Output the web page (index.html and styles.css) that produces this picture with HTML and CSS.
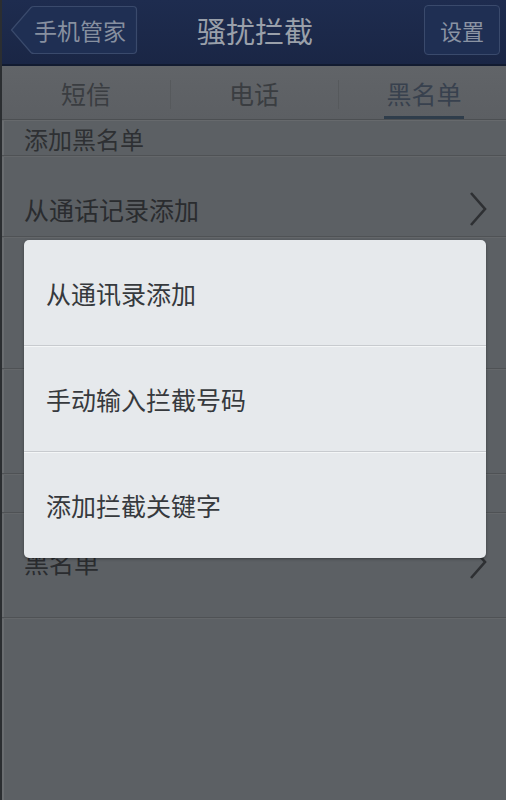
FILE: index.html
```html
<!DOCTYPE html>
<html lang="zh-CN">
<head>
<meta charset="utf-8">
<link rel="stylesheet" href="styles.css">
</head>
<body>
<div class="screen">
  <header class="topbar">
    <div class="back-btn">
      <svg class="back-shape" viewBox="0 0 128 50" width="128" height="50">
        <path d="M1.5 25 L21 2.5 Q22 1.5 24 1.5 H123 Q126.5 1.5 126.5 5 V45 Q126.5 48.5 123 48.5 H24 Q22 48.5 21 47.5 Z" fill="#1f2f53" stroke="#3a4a6c" stroke-width="1.2"/>
      </svg>
      <span class="back-label">手机管家</span>
    </div>
    <div class="title">骚扰拦截</div>
    <div class="set-btn">设置</div>
  </header>

  <nav class="tabs">
    <div class="tab">短信</div>
    <div class="tab tab-sep">电话</div>
    <div class="tab tab-sep active"><span class="tab-label">黑名单</span></div>
  </nav>

  <div class="section-head">添加黑名单</div>
  <div class="row row-first">
    <span class="row-text">从通话记录添加</span>
    <svg class="chev" viewBox="0 0 20 36" width="20" height="36"><path d="M3 2 L17 18 L3 34" fill="none" stroke="#2e3033" stroke-width="2.6"/></svg>
  </div>
  <div class="row row-hidden-a"></div>
  <div class="row row-hidden-b"></div>
  <div class="section-head section-gap"></div>
  <div class="row row-last">
    <span class="row-text">黑名单</span>
    <svg class="chev" viewBox="0 0 20 36" width="20" height="36"><path d="M3 2 L17 18 L3 34" fill="none" stroke="#2e3033" stroke-width="2.6"/></svg>
  </div>

  <div class="dialog">
    <div class="dlg-item">从通讯录添加</div>
    <div class="dlg-item">手动输入拦截号码</div>
    <div class="dlg-item">添加拦截关键字</div>
  </div>
</div>
</body>
</html>
```

FILE: styles.css
```css
html, body {
  margin: 0;
  padding: 0;
}
body {
  width: 506px;
  height: 800px;
  overflow: hidden;
  background: #5c6064;
  font-family: "Noto Sans CJK SC", "Noto Sans", sans-serif;
}
.screen {
  position: relative;
  width: 506px;
  height: 800px;
  box-sizing: border-box;
  border-left: 2px solid #2b2e31;
  box-shadow: inset 2px 0 0 #6a6d70;
  background: #5c6064;
}

/* header */
.topbar {
  height: 60px;
  border-bottom: 2px solid #121b30;
  background: linear-gradient(#1e2c4f, #1a2645);
  display: grid;
  grid-template-columns: 1fr auto 1fr;
  align-items: center;
  padding: 0 4px 4px 8px;
}
.back-btn {
  display: grid;
  width: 128px;
  height: 50px;
}
.back-shape, .back-label {
  grid-area: 1 / 1;
}
.back-label {
  align-self: center;
  justify-self: end;
  margin-right: 12px;
  font-size: 23px;
  color: #8790a0;
}
.title {
  text-align: center;
  font-size: 29px;
  color: #9aa0aa;
  margin-left: -2px;
}
.set-btn {
  justify-self: end;
  margin-right: 2px;
  width: 74px;
  height: 48px;
  border: 1px solid #3a4a6c;
  border-radius: 4px;
  background: #1f2f53;
  display: flex;
  align-items: center;
  justify-content: center;
  font-size: 22px;
  color: #8a93a3;
}

/* tabs */
.tabs {
  height: 53px;
  display: flex;
  background: linear-gradient(#616468, #5c5f63);
  border-bottom: 1px solid #4c4f52;
  box-shadow: 0 1px 0 #66696c;
}
.tab {
  flex: 1;
  display: flex;
  align-items: center;
  justify-content: center;
  font-size: 25px;
  color: #3a3d41;
  position: relative;
}
.tab-sep::before {
  content: "";
  position: absolute;
  left: 0;
  top: 14px;
  bottom: 10px;
  width: 1px;
  background: #56595c;
}
.tab.active { color: #38414e; }
.tab-label {
  align-self: stretch;
  display: flex;
  align-items: center;
  border-bottom: 3px solid #2f3d4b;
  padding: 4px 2px 0;
  margin-left: 4px;
}

/* list */
.section-head {
  height: 34px;
  padding-left: 22px;
  display: flex;
  align-items: center;
  font-size: 24px;
  color: #2e3033;
  border-bottom: 1px solid #4f5255;
  box-shadow: 0 1px 0 #64676a;
  margin-top: 1px;
}
.row {
  height: 80px;
  padding: 0 18px 0 22px;
  display: flex;
  align-items: center;
  justify-content: space-between;
  border-bottom: 1px solid #4f5255;
  box-shadow: 0 1px 0 #64676a;
}
.row-text {
  font-size: 25px;
  color: #2a2c2f;
}
.row-first {
  height: 54px;
  padding-top: 26px;
}
.row-hidden-a { height: 131px; }
.row-hidden-b { height: 104px; }
.section-gap { height: 38px; margin-top: 0; }
.row-last {
  height: 98px;
  padding-bottom: 6px;
}
.chev { flex: none; }

/* dialog overlay */
.dialog {
  position: absolute;
  left: 22px;
  top: 240px;
  width: 462px;
  border-radius: 5px;
  background: #e6e9ec;
  box-shadow: 0 1px 3px rgba(0,0,0,0.35);
  display: flex;
  flex-direction: column;
}
.dlg-item {
  height: 105px;
  padding-left: 22px;
  display: flex;
  align-items: center;
  font-size: 25px;
  color: #36393d;
  border-bottom: 1px solid #c8cbcf;
  box-shadow: 0 1px 0 #f4f6f7;
}
.dlg-item:last-child {
  border-bottom: none;
  box-shadow: none;
  height: 106px;
}
```
